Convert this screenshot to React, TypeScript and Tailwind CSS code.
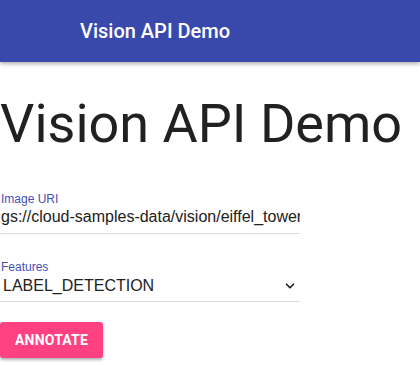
import { ChevronDown } from "lucide-react"

export default function App() {
  return (
    <div className="min-h-screen bg-white font-['Roboto',sans-serif] text-[#212121]">
      <header className="h-[62px] bg-[#3949ab] flex items-center pl-[80px] shadow-[0_2px_4px_rgba(0,0,0,0.3)]">
        <span className="text-white text-[20px] font-medium">Vision API Demo</span>
      </header>

      <main className="pt-[34px]">
        <h1 className="text-[54px] leading-[56px] font-normal text-[#212121]">Vision API Demo</h1>

        <form className="mt-[40px] w-[300px] flex flex-col">
          <label className="text-[12px] leading-[14px] text-[#3f51b5] pl-[1px] font-['Liberation_Sans',sans-serif]">Image URI</label>
          <input
            readOnly
            value="gs://cloud-samples-data/vision/eiffel_tower.jpg"
            className="w-full border-b border-[#dcdcdc] pb-[6px] pt-[1px] pl-[1px] text-[16px] leading-[20px] outline-none bg-transparent text-[#212121] font-['Liberation_Sans',sans-serif]"
          />

          <label className="mt-[26px] text-[12px] leading-[14px] text-[#3f51b5] pl-[1px] font-['Liberation_Sans',sans-serif]">Features</label>
          <div className="border-b border-[#dcdcdc] pb-[5px] pt-[2px] flex items-center justify-between">
            <span className="text-[16px] leading-[20px] pl-[3px] font-['Liberation_Sans',sans-serif]">LABEL_DETECTION</span>
            <ChevronDown className="w-[14px] h-[14px] mr-[3px]" strokeWidth={3} />
          </div>

          <div className="mt-[20px]">
            <button
              type="button"
              className="h-[36px] w-[103px] rounded-[3px] bg-[#ff4081] text-white text-[14px] font-bold tracking-[0.2px] shadow-[0_2px_3px_rgba(0,0,0,0.3)] font-['Roboto',sans-serif]"
            >
              ANNOTATE
            </button>
          </div>
        </form>
      </main>
    </div>
  )
}
